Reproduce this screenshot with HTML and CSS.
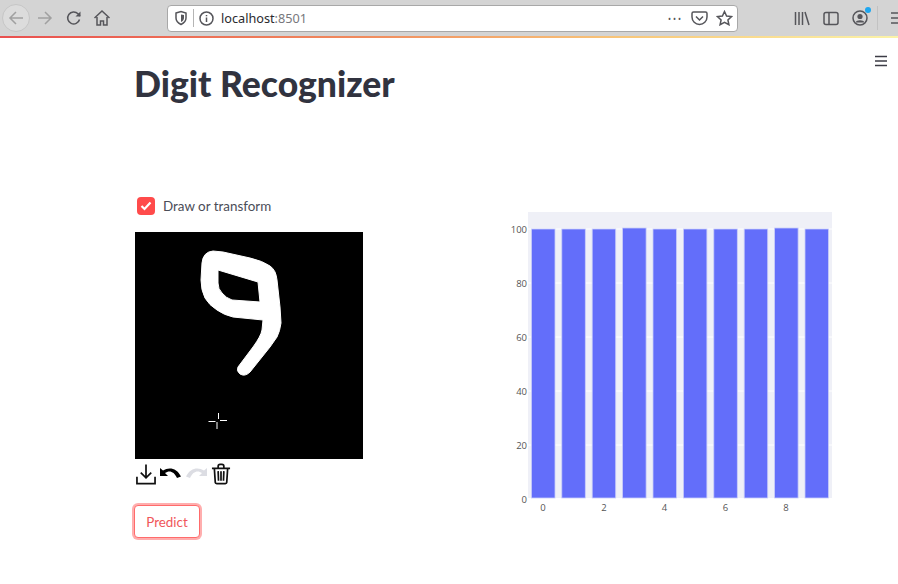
FILE: index.html
```html
<!DOCTYPE html>
<html lang="en">
<head>
  <meta charset="UTF-8">
  <title>Digit Recognizer</title>
  <link rel="stylesheet" href="styles.css">
</head>
<body>
  <div class="toolbar">
    <div class="nav-group">
      <span class="back-btn">
        <svg width="18" height="18" viewBox="0 0 18 18" class="ico-faded"><path d="M16 9H3M9 3L3 9l6 6"/></svg>
      </span>
      <svg width="18" height="18" viewBox="0 0 18 18" class="ico-faded forward"><path d="M2 9h13M9 3l6 6-6 6"/></svg>
      <svg width="18" height="18" viewBox="0 0 18 18" class="ico reload"><path d="M14.500 10.500A6 6 0 1 1 13 4.800L15 7"/><path d="M15.500 2.500V7.500H10.500" class="solid"/></svg>
      <svg width="18" height="18" viewBox="0 0 18 18" class="ico home"><path d="M1.500 9L9 2l7.500 7M4 8v8h3.500v-4h3v4H14V8"/></svg>
    </div>
    <div class="urlbar">
      <svg width="14" height="16" viewBox="0 0 14 16" class="ico"><path d="M2 3l5-1.500L12 3v5c0 3-2 5-5 6.500C4 13 2 11 2 8z"/><path d="M7 4.500L10 5v3c0 1.500-1 3-3 4z" class="solid"/></svg>
      <span class="url-sep"></span>
      <svg width="15" height="15" viewBox="0 0 15 15" class="ico"><circle cx="7.500" cy="7.500" r="6.500"/><path d="M7.500 6.500V11M7.500 4v1.300"/></svg>
      <span class="url-text">localhost<span class="url-port">:8501</span></span>
      <span class="url-actions">
        <span class="dots">•••</span>
        <svg width="17" height="15" viewBox="0 0 17 15" class="ico"><path d="M2.500 1h12A1.500 1.500 0 0 1 16 2.500V6a7.500 7.500 0 0 1-15 0V2.500A1.500 1.500 0 0 1 2.500 1z"/><path d="M5 5.500l3.500 3.500L12 5.500"/></svg>
        <svg width="17" height="16" viewBox="0 0 17 16" class="ico"><path d="M8.500 1.500l2.100 4.500 4.900.6-3.600 3.300 1 4.800-4.400-2.400-4.400 2.400 1-4.800L1.500 6.600l4.900-.6z"/></svg>
      </span>
    </div>
    <div class="tool-group">
      <svg width="16" height="15" viewBox="0 0 16 15" class="ico"><path d="M1.500 1v13M5 1v13M8.500 1v13M11 1l4 13"/></svg>
      <svg width="16" height="15" viewBox="0 0 16 15" class="ico"><rect x="1" y="1.500" width="14" height="12" rx="2"/><path d="M6 2v11"/></svg>
      <span class="account">
        <svg width="16" height="16" viewBox="0 0 16 16" class="ico"><circle cx="8" cy="8" r="7"/><circle cx="8" cy="6.500" r="2.600" class="solid"/><path d="M3.500 12.500c1-3 8-3 9 0" class="solid"/></svg>
        <span class="badge"></span>
      </span>
      <span class="tool-sep"></span>
      <svg width="16" height="14" viewBox="0 0 16 14" class="ico"><path d="M0 2h16M0 7h16M0 12h16"/></svg>
    </div>
  </div>
  <div class="loadbar"></div>

  <div class="page">
    <svg width="14" height="12" viewBox="0 0 14 12" class="page-menu"><path d="M1 1.500h12M1 6h12M1 10.500h12"/></svg>
    <h1 class="title">Digit Recognizer</h1>

    <div class="columns">
      <div class="left-col">
        <label class="check-row">
          <span class="checkbox">
            <svg width="12" height="10" viewBox="0 0 12 10"><path d="M1.500 5l3 3 6-6.500"/></svg>
          </span>
          Draw or transform
        </label>

        <div class="canvas">
          <svg width="228" height="227" viewBox="0 0 228 227">
            <path class="stroke" d="M78 19L88 20L115 26Q128 29 135 34Q141 38 142 48L145 75L146 91Q145 99 142 105L135 115L115 140Q110 145 105 142Q101 139 103 135L118 115Q126 104 127 98L128 88L98 85Q89 83 82 78Q74 73 70 66Q66 58 66 48L67 31Q68 20 78 19ZM83 38L83 51Q83 57 87 61Q91 66 97 68L125 70L123 50Z"/>
            <path class="cursor" d="M83.500 181v6M82 190v7M73.500 189.500h7M85 188.500h7"/>
          </svg>
        </div>

        <div class="canvas-tools">
          <svg width="20" height="22" viewBox="0 0 21 22" class="tool"><path d="M10.500 1v14M5 9.500l5.500 5.500L16 9.500M1 14v7h19v-7"/></svg>
          <svg width="23" height="22" viewBox="0 0 23 22" class="tool-fill"><path d="M1 5v8h8L6 10c4-3 9-2 12 5l4-1.500C18 5 10 3.500 4 7.500z"/></svg>
          <svg width="23" height="22" viewBox="0 0 23 22" class="tool-off"><path d="M22 5v8h-8l3-3c-4-3-9-2-12 5l-4-1.500C5 5 13 3.500 19 7.500z"/></svg>
          <svg width="20" height="22" viewBox="0 0 21 22" class="tool"><path d="M1 5h19M7.500 5V3q0-2 2-2h2q2 0 2 2v2M3.500 5l1 15q0 1 1.500 1h9q1.500 0 1.500-1l1-15M7.500 8l.4 10M10.500 8v10M13.500 8l-.4 10"/></svg>
        </div>

        <button class="predict">Predict</button>
      </div>

      <div class="chart">
        <svg width="345" height="320" viewBox="0 0 345 320">
          <rect class="plot-bg" x="38" y="0" width="304" height="286"/>
          <g class="grid">
            <path d="M38 233h304M38 179h304M38 125h304M38 71h304M38 17h304"/>
          </g>
          <g class="bars">
            <rect x="41.500" y="17" width="23.500" height="269"/>
            <rect x="71.800" y="17" width="23.500" height="269"/>
            <rect x="102.200" y="17" width="23.500" height="269"/>
            <rect x="132.600" y="16" width="23.500" height="270"/>
            <rect x="163" y="17" width="23.500" height="269"/>
            <rect x="193.400" y="17" width="23.500" height="269"/>
            <rect x="223.800" y="17" width="23.500" height="269"/>
            <rect x="254.200" y="17" width="23.500" height="269"/>
            <rect x="284.600" y="16" width="23.500" height="270"/>
            <rect x="315" y="17" width="23.500" height="269"/>
          </g>
          <g class="y-labels">
            <text x="37" y="21">100</text>
            <text x="37" y="75">80</text>
            <text x="37" y="129">60</text>
            <text x="37" y="183">40</text>
            <text x="37" y="237">20</text>
            <text x="37" y="291">0</text>
          </g>
          <g class="x-labels">
            <text x="53" y="299">0</text>
            <text x="114" y="299">2</text>
            <text x="174.500" y="299">4</text>
            <text x="235.500" y="299">6</text>
            <text x="296" y="299">8</text>
          </g>
        </svg>
      </div>
    </div>
  </div>
</body>
</html>
```

FILE: styles.css
```css
html, body {
  margin: 0;
  padding: 0;
  height: 584px;
  overflow: hidden;
  background-color: #fff;
}
body {
  font-family: "Noto Sans", sans-serif;
}

/* browser chrome */
.toolbar {
  display: flex;
  align-items: center;
  height: 36px;
  background-color: #d4d4d4;
}
.loadbar {
  height: 2px;
  background: linear-gradient(to right, #e9504f, #f08a5d 40%, #f8c77a 70%, #fbf3a8);
}
.nav-group {
  display: flex;
  flex: none;
  align-items: center;
  width: 167px;
  padding-left: 2px;
  box-sizing: border-box;
}
.back-btn {
  display: flex;
  align-items: center;
  justify-content: center;
  width: 28px;
  height: 28px;
  border-radius: 50%;
  background-color: #dcdcdc;
  border: 1px solid #c6c6c6;
  box-sizing: border-box;
}
.forward {
  margin-left: 6px;
}
.reload {
  margin-left: 11px;
}
.home {
  margin-left: 10px;
}
.ico, .ico-faded {
  flex: none;
  fill: none;
  stroke: #55555a;
  stroke-width: 1.500;
}
.ico-faded {
  stroke: #a0a0a0;
}
.ico .solid {
  fill: #55555a;
  stroke: none;
}
.urlbar {
  display: flex;
  flex: none;
  align-items: center;
  width: 571px;
  height: 27px;
  padding: 0 4px 0 6px;
  box-sizing: border-box;
  background-color: #fff;
  border: 1px solid #a8a8a8;
  border-radius: 4px;
}
.url-sep {
  width: 1px;
  height: 18px;
  margin: 0 5px;
  background-color: #b5b5b5;
}
.url-text {
  margin-left: 7px;
  font-size: 12.700px;
  color: #2a2a2e;
}
.url-port {
  color: #77777c;
}
.url-actions {
  display: flex;
  align-items: center;
  gap: 8px;
  margin-left: auto;
}
.dots {
  font-size: 8px;
  letter-spacing: 2px;
  color: #55555a;
}
.tool-group {
  display: flex;
  flex: none;
  align-items: center;
  margin-left: 56px;
  gap: 13px;
}
.account {
  position: relative;
  display: flex;
}
.badge {
  position: absolute;
  top: -3px;
  right: -3px;
  width: 6px;
  height: 6px;
  border-radius: 50%;
  background-color: #1ea7f0;
}
.tool-sep {
  width: 1px;
  height: 24px;
  margin-left: -4px;
  background-color: #c2c2c2;
}

/* app */
.page {
  position: relative;
  padding: 25px 0 0 135px;
}
.page-menu {
  position: absolute;
  top: 17px;
  right: 10px;
  fill: none;
  stroke: #3c3c46;
  stroke-width: 1.500;
}
.title {
  margin: 0 0 0 -1px;
  font-family: "Lato", sans-serif;
  font-size: 35.500px;
  line-height: 42px;
  font-weight: 900;
  color: #31333f;
}
.columns {
  display: flex;
  margin-top: 91px;
}
.left-col {
  width: 363px;
}
.check-row {
  display: flex;
  align-items: center;
  gap: 8px;
  height: 20px;
  margin-bottom: 16px;
  font-family: "Lato", sans-serif;
  font-size: 13.400px;
  color: #4b4d58;
}
.checkbox {
  display: flex;
  align-items: center;
  justify-content: center;
  width: 18px;
  height: 18px;
  margin-left: 2px;
  border-radius: 4px;
  background-color: #ff4b4b;
}
.checkbox svg {
  fill: none;
  stroke: #fff;
  stroke-width: 2.200;
}
.canvas {
  width: 228px;
  height: 227px;
  background-color: #000;
}
.canvas svg {
  display: block;
}
.stroke {
  fill: #fff;
  fill-rule: evenodd;
  stroke: #fff;
  stroke-width: 1;
  stroke-linejoin: round;
}
.cursor {
  fill: none;
  stroke: #fff;
  stroke-width: 1;
}
.canvas-tools {
  display: flex;
  align-items: center;
  gap: 3px;
  margin-top: 4px;
  padding-left: 1px;
}
.tool {
  fill: none;
  stroke: #111;
  stroke-width: 1.800;
}
.tool-fill {
  fill: #000;
}
.tool-off {
  fill: #dcdde3;
}
.predict {
  display: block;
  width: 66px;
  height: 33px;
  margin: 20px 0 0 -1px;
  padding: 0;
  font-family: "Lato", sans-serif;
  font-size: 13.400px;
  color: #f0565a;
  background-color: #fff;
  border: 1px solid #ff6b6b;
  border-radius: 4px;
  box-shadow: 0 0 0 2px rgba(255, 75, 75, 0.45);
}
.chart {
  margin: 16px 0 0 -8px;
}
.chart svg {
  display: block;
}
.plot-bg {
  fill: #eff0f7;
}
.grid path {
  fill: none;
  stroke: #fff;
  stroke-width: 1;
}
.bars rect {
  fill: #636efa;
  stroke: #c9cdf9;
  stroke-width: 0.800;
}
.y-labels text, .x-labels text {
  font-family: "Open Sans", sans-serif;
  font-size: 9.500px;
  fill: #555;
}
.y-labels text {
  text-anchor: end;
}
.x-labels text {
  text-anchor: middle;
}
```
